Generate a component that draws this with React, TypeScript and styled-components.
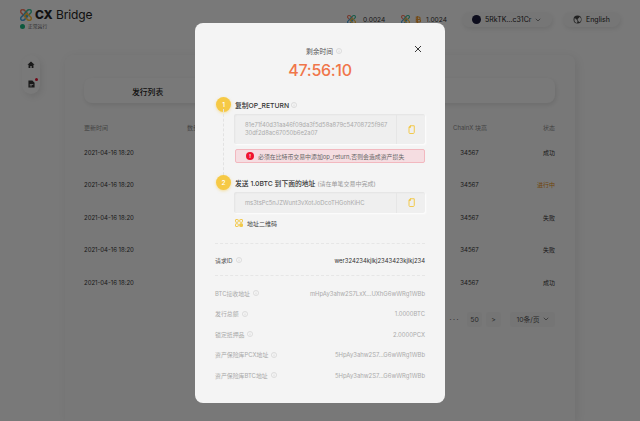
import React from "react";
import styled, { createGlobalStyle } from "styled-components";

const Global = createGlobalStyle`
  html, body { margin: 0; padding: 0; background: #f2f2f2; }
  body { font-family: Inter, "Noto Sans CJK SC", sans-serif; overflow: hidden; }
  * { box-sizing: border-box; }
`;

const Page = styled.div`
  position: relative;
  width: 640px;
  height: 421px;
  overflow: hidden;
  background: #f2f2f2;
`;
const Header = styled.header`
  height: 55px;
  padding: 8px 20px 0 20px;
  display: flex;
  justify-content: space-between;
  align-items: flex-start;
`;
const Brand = styled.div`
  display: flex;
  flex-direction: column;
  gap: 1px;
`;
const BrandRow = styled.div`
  display: flex;
  align-items: center;
  gap: 3px;
  height: 14px;
  font-size: 12px;
  line-height: 14px;
  color: #222;
  letter-spacing: -0.1px;
`;
const BrandBold = styled.b`
  font-weight: 800;
`;
const Status = styled.div`
  display: flex;
  align-items: center;
  gap: 3px;
  font-size: 4.8px;
  line-height: 6px;
  color: #555;
`;
const Dot = styled.i`
  width: 5px;
  height: 5px;
  border-radius: 50%;
  background: #18b07a;
`;
const HeaderRight = styled.div`
  display: flex;
  align-items: center;
  height: 15px;
  margin-top: 4px;
`;
const Balance = styled.div<{ $w: number; $gap: number }>`
  display: flex;
  align-items: center;
  gap: ${(p) => p.$gap}px;
  width: ${(p) => p.$w}px;
  font-size: 6.6px;
  color: #333;
`;
const Pill = styled.div<{ $w: number; $ml: number }>`
  display: flex;
  align-items: center;
  gap: 4px;
  width: ${(p) => p.$w}px;
  height: 15px;
  margin-left: ${(p) => p.$ml}px;
  padding-left: 10px;
  border-radius: 8px;
  background: #ededed;
  box-shadow: 1px 2px 4px rgba(0, 0, 0, 0.08);
  font-size: 7px;
  color: #222;
`;
const Avatar = styled.i`
  width: 9px;
  height: 9px;
  border-radius: 50%;
  background: #1a1a3a;
  flex: none;
`;
const Body = styled.div`
  display: flex;
  padding-left: 22px;
`;
const Side = styled.nav`
  width: 18px;
  height: 39px;
  border-radius: 9px;
  background: #f2f2f2;
  box-shadow: 2px 3px 6px rgba(0, 0, 0, 0.08);
  display: flex;
  flex-direction: column;
  align-items: center;
  padding-top: 6px;
  gap: 9px;
`;
const SideIcon = styled.div`
  position: relative;
  width: 9px;
  height: 10px;
  display: flex;
  justify-content: center;
`;
const Badge = styled.i`
  position: absolute;
  top: -2px;
  right: -2px;
  width: 3px;
  height: 3px;
  border-radius: 50%;
  background: #e01030;
`;
const Card = styled.main`
  width: 510px;
  height: 366px;
  margin-left: 25px;
  padding: 23px 20px 0 19px;
  border-radius: 8px 8px 0 0;
  background: #f1f1f1;
  box-shadow: 2px 2px 10px rgba(0, 0, 0, 0.08);
`;
const Tabs = styled.div`
  height: 25px;
  border-radius: 8px;
  background: #f2f2f2;
  box-shadow: 1px 2px 5px rgba(0, 0, 0, 0.1);
  display: flex;
  align-items: center;
  padding: 1px 0 0 48px;
  font-size: 7.8px;
  font-weight: 500;
  color: #222;
`;
const TableRow = styled.div`
  display: grid;
  grid-template-columns: 103px 1fr 33px 69px;
  align-items: center;
  height: 32.5px;
  font-size: 6px;
  color: #333;
`;
const HeadRow = styled(TableRow)`
  height: 12px;
  margin: 18px 0 3px;
  color: #888;
`;
const Amount = styled.span`
  padding-left: 12px;
`;
const Center = styled.span`
  text-align: center;
  white-space: nowrap;
`;
const Right = styled.span<{ $warn?: boolean }>`
  text-align: right;
  color: ${(p) => (p.$warn ? "#e08a10" : "inherit")};
`;
const Pager = styled.div`
  display: flex;
  justify-content: flex-end;
  align-items: center;
  gap: 4px;
  margin-top: 13px;
  font-size: 6.8px;
  color: #555;
`;
const Dots = styled.span`
  letter-spacing: 1.5px;
  font-size: 7px;
`;
const PageBox = styled.span<{ $w: number; $ml?: number }>`
  display: flex;
  align-items: center;
  justify-content: center;
  gap: 3px;
  width: ${(p) => p.$w}px;
  height: 15px;
  margin-left: ${(p) => p.$ml || 0}px;
  background: #ebebeb;
  border-radius: 2px;
`;
const Overlay = styled.div`
  position: absolute;
  inset: 0;
  background: rgba(0, 0, 0, 0.5);
`;
const Modal = styled.section`
  position: absolute;
  left: 195px;
  top: 23px;
  width: 250px;
  height: 380px;
  padding: 0 20px;
  border-radius: 8px;
  background: #f4f4f4;
  display: flex;
  flex-direction: column;
`;
const CloseBtn = styled.div`
  position: absolute;
  left: 219px;
  top: 22px;
  width: 8px;
  height: 8px;
  display: flex;
`;
const TimeLabel = styled.div`
  margin: 24px 0 0 8px;
  display: flex;
  justify-content: center;
  align-items: center;
  gap: 3px;
  height: 8px;
  font-size: 6.8px;
  color: #555;
`;
const Timer = styled.div`
  margin-top: 4px;
  text-align: center;
  font-size: 16px;
  line-height: 22px;
  font-weight: 500;
  letter-spacing: -0.3px;
  color: #f0764a;
`;
const StepHead = styled.div<{ $mt: number }>`
  position: relative;
  display: flex;
  align-items: center;
  gap: 2px;
  height: 10px;
  margin-top: ${(p) => p.$mt}px;
  padding-left: 20px;
  font-size: 6.8px;
  font-weight: 500;
  color: #333;
`;
const StepNum = styled.span`
  position: absolute;
  left: 1px;
  top: -3px;
  width: 15px;
  height: 15px;
  border-radius: 50%;
  background: #f6c945;
  color: #fff;
  font-size: 6.6px;
  display: flex;
  align-items: center;
  justify-content: center;
  box-shadow: 0 1px 3px rgba(246, 201, 69, 0.5);
`;
const StepNote = styled.span`
  font-size: 6px;
  font-weight: 400;
  color: #999;
`;
const StepBody = styled.div`
  position: relative;
  padding-left: 19px;
`;
const Dashes = styled.i`
  position: absolute;
  left: 8px;
  top: -1px;
  bottom: -12px;
  border-left: 1px dashed #e2e2e2;
`;
const AddressBox = styled.div<{ $h: number }>`
  display: flex;
  align-items: stretch;
  height: ${(p) => p.$h}px;
  margin-top: 4px;
  background: #efefef;
  border-radius: 2px;
  box-shadow: inset 1px 1px 2px rgba(0, 0, 0, 0.05), 1px 1px 2px rgba(255, 255, 255, 0.9);
`;
const AddressText = styled.div`
  flex: 1;
  display: flex;
  align-items: center;
  padding: 0 7px 0 11px;
  font-size: 5.85px;
  line-height: 8px;
  color: #aaa;
  word-break: break-all;
`;
const CopyCell = styled.div`
  width: 29px;
  display: flex;
  align-items: center;
  justify-content: center;
  border-left: 1px solid #e6e6e6;
`;
const Warning = styled.div`
  display: flex;
  align-items: center;
  gap: 4px;
  height: 14px;
  margin: 5px 0 0 1px;
  padding-left: 10px;
  border: 1px solid #f2b8bf;
  border-radius: 2px;
  background: #f5dde1;
  font-size: 5.9px;
  color: #666;
`;
const WarnDot = styled.i`
  width: 8px;
  height: 8px;
  border-radius: 50%;
  background: #f0142f;
  color: #fff;
  font-size: 5px;
  font-style: normal;
  font-weight: 700;
  text-align: center;
  line-height: 8px;
`;
const QrRow = styled.div`
  display: flex;
  align-items: center;
  gap: 4px;
  height: 10px;
  margin: 5px 0 0 1px;
  font-size: 6px;
  color: #444;
`;
const Sep = styled.hr<{ $mt: number }>`
  margin: ${(p) => p.$mt}px 0 0;
  border: 0;
  border-top: 1px dashed #e6e6e6;
`;
const InfoRow = styled.div<{ $mt: number; $dark?: boolean }>`
  display: flex;
  justify-content: space-between;
  align-items: center;
  height: 10px;
  margin-top: ${(p) => p.$mt}px;
  font-size: 5.9px;
  color: ${(p) => (p.$dark ? "#333" : "#aaa")};
`;
const InfoLabel = styled.span<{ $dark?: boolean }>`
  display: flex;
  align-items: center;
  gap: 3px;
  color: ${(p) => (p.$dark ? "#555" : "#aaa")};
`;

const Hint = () => (
  <svg width="6" height="6" viewBox="0 0 12 12" fill="none" stroke="#c8c8c8" strokeWidth="1">
    <circle cx="6" cy="6" r="5.2" />
    <path d="M6 5v4M6 3v1" />
  </svg>
);
const Copy = () => (
  <svg width="7" height="9" viewBox="0 0 14 18" fill="none" stroke="#f2c94c" strokeWidth="2">
    <path d="M4 1.5h8.5V15a2 2 0 0 1-2 2H4a2 2 0 0 1-2-2V4z" />
    <path d="M5 1.5V5H2" />
  </svg>
);
const Logo = ({ size = 12 }: { size?: number }) => (
  <svg width={size} height={size} viewBox="0 0 24 24" fill="none" strokeWidth="3">
    <rect x="0.5" y="3.5" width="15" height="8" rx="4" stroke="#ef7a62" transform="rotate(45 8 7.5)" />
    <rect x="8.5" y="3.5" width="15" height="8" rx="4" stroke="#3fbb9a" transform="rotate(-45 16 7.5)" />
    <rect x="0.5" y="12.5" width="15" height="8" rx="4" stroke="#4aa0d4" transform="rotate(-45 8 16.5)" />
    <rect x="8.5" y="12.5" width="15" height="8" rx="4" stroke="#f5bb40" transform="rotate(45 16 16.5)" />
  </svg>
);
const Chevron = () => (
  <svg width="6" height="4" viewBox="0 0 12 8" fill="none" stroke="#555" strokeWidth="1.4">
    <path d="M1.5 1.5 6 6l4.5-4.5" />
  </svg>
);

const rows: [string, boolean][] = [
  ["成功", false],
  ["进行中", true],
  ["失败", false],
  ["失败", false],
  ["成功", false],
];

export default function App() {
  return (
    <Page>
      <Global />
      <Header>
        <Brand>
          <BrandRow>
            <Logo />
            <span>
              <BrandBold>CX</BrandBold> Bridge
            </span>
          </BrandRow>
          <Status>
            <Dot />
            正常运行
          </Status>
        </Brand>
        <HeaderRight>
          <Balance $w={54} $gap={7}>
            <Logo size={9} />
            <span>0.0024</span>
          </Balance>
          <Balance $w={48} $gap={5}>
            <Logo size={9} />
            <svg width="6" height="9" viewBox="0 0 14 18" fill="none" stroke="#e8962e" strokeWidth="2.4">
              <path d="M3 3h6a3 3 0 0 1 0 6H3h7a3 3 0 0 1 0 6H3zM6 1v16" />
            </svg>
            <span>1.0024</span>
          </Balance>
          <Pill $w={90} $ml={13}>
            <Avatar />
            5RkTK...c31Cr
            <Chevron />
          </Pill>
          <Pill $w={57} $ml={11}>
            <svg width="9" height="9" viewBox="0 0 18 18" fill="#444">
              <path d="M9 1a8 8 0 1 0 0 16A8 8 0 0 0 9 1zM3 9c0-1 .2-2 .7-2.8L7 9l1 1 1 3-1 2.8A6 6 0 0 1 3 9zm9 5.5L11 12l-2-2 1-3 2-1 1-2.5a6 6 0 0 1-1 11z" />
            </svg>
            English
          </Pill>
        </HeaderRight>
      </Header>
      <Body>
        <Side>
          <SideIcon>
            <svg width="8" height="8" viewBox="0 0 18 18" fill="#333">
              <path d="M9 1 1 8.5h2.5V16h4v-5h3v5h4V8.5H17z" />
            </svg>
          </SideIcon>
          <SideIcon>
            <svg width="7" height="8" viewBox="0 0 16 18" fill="#333">
              <path d="M1 1h9l5 5v11H1zM4 9v1.500h8V9zm0 3.500V14h5v-1.500z" fillRule="evenodd" />
            </svg>
            <Badge />
          </SideIcon>
        </Side>
        <Card>
          <Tabs>发行列表</Tabs>
          <HeadRow>
            <span>更新时间</span>
            <span>数量</span>
            <Center>ChainX 块高</Center>
            <Right>状态</Right>
          </HeadRow>
          {rows.map(([state, warn], i) => (
            <TableRow key={i}>
              <span>2021-04-16 18:20</span>
              <Amount>1.0000</Amount>
              <Center>34567</Center>
              <Right $warn={warn}>{state}</Right>
            </TableRow>
          ))}
          <Pager>
            <Dots>···</Dots>
            <PageBox $w={15} $ml={3}>50</PageBox>
            <PageBox $w={15}>&gt;</PageBox>
            <PageBox $w={45} $ml={5}>
              10条/页 <Chevron />
            </PageBox>
          </Pager>
        </Card>
      </Body>
      <Overlay />
      <Modal>
        <CloseBtn>
          <svg width="8" height="8" viewBox="0 0 16 16" stroke="#222" strokeWidth="1.8">
            <path d="M2 2l12 12M14 2 2 14" />
          </svg>
        </CloseBtn>
        <TimeLabel>
          剩余时间 <Hint />
        </TimeLabel>
        <Timer>47:56:10</Timer>
        <StepHead $mt={19}>
          <StepNum>1</StepNum>
          复制OP_RETURN <Hint />
        </StepHead>
        <StepBody>
          <Dashes />
          <AddressBox $h={30}>
            <AddressText>81e71f40d31aa46f09da3f5d58a879c54708725f96730df2d8ac67050b6e2a07</AddressText>
            <CopyCell>
              <Copy />
            </CopyCell>
          </AddressBox>
          <Warning>
            <WarnDot>!</WarnDot>
            必须在比特币交易中添加op_return,否则会造成资产损失
          </Warning>
        </StepBody>
        <StepHead $mt={15}>
          <StepNum>2</StepNum>
          发送 1.0BTC 到下面的地址<StepNote>(请在单笔交易中完成)</StepNote>
        </StepHead>
        <StepBody>
          <AddressBox $h={21}>
            <AddressText>ms3tsPc5nJZWunt3vXotJoDcoTHGohKiHC</AddressText>
            <CopyCell>
              <Copy />
            </CopyCell>
          </AddressBox>
          <QrRow>
            <svg width="8" height="8" viewBox="0 0 16 16" fill="none" stroke="#f2c94c" strokeWidth="2">
              <rect x="1" y="1" width="5.5" height="5.5" rx="1" />
              <rect x="9.5" y="1" width="5.5" height="5.5" rx="1" />
              <rect x="1" y="9.5" width="5.5" height="5.5" rx="1" />
              <rect x="9.5" y="9.5" width="5.5" height="5.5" rx="1" fill="#f2c94c" />
            </svg>
            地址二维码
          </QrRow>
        </StepBody>
        <Sep $mt={15} />
        <InfoRow $mt={11} $dark>
          <InfoLabel $dark>
            请求ID <Hint />
          </InfoLabel>
          wer324234kjlkj2343423kjlkj234
        </InfoRow>
        <Sep $mt={10} />
        <InfoRow $mt={12}>
          <InfoLabel>
            BTC接收地址 <Hint />
          </InfoLabel>
          mHpAy3ahw2S7LxX...UXhG6wWRg1WBb
        </InfoRow>
        <InfoRow $mt={10.5}>
          <InfoLabel>
            发行总额 <Hint />
          </InfoLabel>
          1.0000BTC
        </InfoRow>
        <InfoRow $mt={10.5}>
          <InfoLabel>
            锁定抵押品 <Hint />
          </InfoLabel>
          2.0000PCX
        </InfoRow>
        <InfoRow $mt={10.5}>
          <InfoLabel>
            资产保险库PCX地址 <Hint />
          </InfoLabel>
          5HpAy3ahw2S7...G6wWRg1WBb
        </InfoRow>
        <InfoRow $mt={10.5}>
          <InfoLabel>
            资产保险库BTC地址 <Hint />
          </InfoLabel>
          5HpAy3ahw2S7...G6wWRg1WBb
        </InfoRow>
      </Modal>
    </Page>
  );
}
